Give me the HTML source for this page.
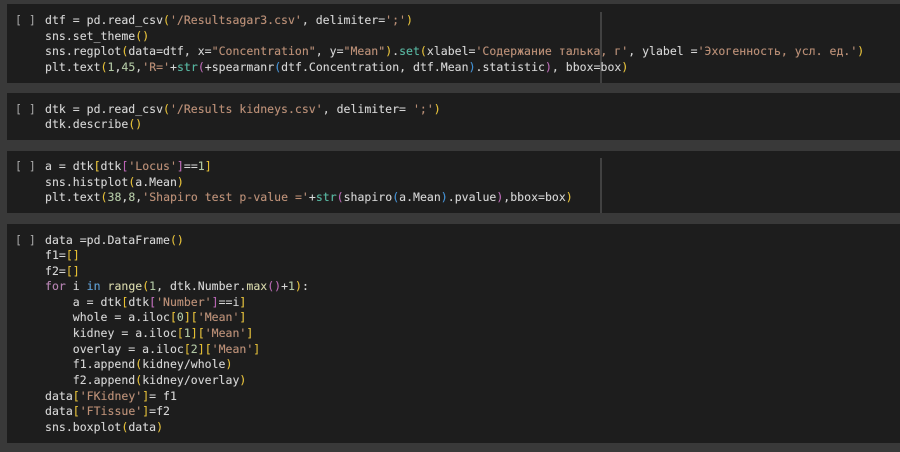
<!DOCTYPE html>
<html><head><meta charset="utf-8">
<style>
html,body{margin:0;padding:0;background:#393939;width:900px;height:452px;overflow:hidden}
.c{position:absolute;left:7px;width:893px;background:#1d1d1d}
.v{position:absolute;left:600px;width:2px;background:#414141}
.l{position:absolute;left:45px;white-space:pre;font:11.5px/16px "DejaVu Sans Mono","Liberation Mono",monospace;letter-spacing:.018px;color:#d6d6d6;text-shadow:0 0 .4px rgba(214,214,214,.55);filter:blur(.3px)}
.b{position:absolute;left:15px;white-space:pre;font:11.5px/16px "DejaVu Sans Mono","Liberation Mono",monospace;color:#a8a8a8;filter:blur(.35px)}
i{font-style:normal}
.s{color:#bd8d72}.y{color:#e8c02e}.p{color:#bb62b5}.u{color:#3a8fd8}.n{color:#b0c8a2}.t{color:#4fb8a0}.f{color:#d8d8a8}.k{color:#b77fb3}.w{color:#569cd6}
</style></head><body>
<div class="c" style="top:4px;height:79px"></div>
<div class="c" style="top:93px;height:47px"></div>
<div class="c" style="top:151px;height:62px"></div>
<div class="c" style="top:224px;height:219px"></div>
<div class="v" style="top:12px;height:71px"></div>
<div class="v" style="top:158px;height:55px"></div>

<div class="b" style="top:12px">[ ]</div>
<div class="l" style="top:12px">dtf = pd.read_csv<i class="y">(</i><i class="s">'/Resultsagar3.csv'</i>, delimiter=<i class="s">';'</i><i class="y">)</i></div>
<div class="l" style="top:27.5px">sns.set_theme<i class="y">()</i></div>
<div class="l" style="top:43px">sns.regplot<i class="y">(</i>data=dtf, x=<i class="s">"Concentration"</i>, y=<i class="s">"Mean"</i><i class="y">)</i>.<i class="t">set</i><i class="y">(</i>xlabel=<i class="s">'Содержание талька, г'</i>, ylabel =<i class="s">'Эхогенность, усл. ед.'</i><i class="y">)</i></div>
<div class="l" style="top:58.5px">plt.text<i class="y">(</i><i class="n">1</i>,<i class="n">45</i>,<i class="s">'R='</i>+<i class="t">str</i><i class="p">(</i>+spearmanr<i class="u">(</i>dtf.Concentration, dtf.Mean<i class="u">)</i>.statistic<i class="p">)</i>, bbox=box<i class="y">)</i></div>

<div class="b" style="top:100.5px">[ ]</div>
<div class="l" style="top:100.5px">dtk = pd.read_csv<i class="y">(</i><i class="s">'/Results kidneys.csv'</i>, delimiter= <i class="s">';'</i><i class="y">)</i></div>
<div class="l" style="top:116px">dtk.describe<i class="y">()</i></div>

<div class="b" style="top:158px">[ ]</div>
<div class="l" style="top:158px">a = dtk<i class="y">[</i>dtk<i class="p">[</i><i class="s">'Locus'</i><i class="p">]</i>==<i class="n">1</i><i class="y">]</i></div>
<div class="l" style="top:173.5px">sns.histplot<i class="y">(</i>a.Mean<i class="y">)</i></div>
<div class="l" style="top:189px">plt.text<i class="y">(</i><i class="n">38</i>,<i class="n">8</i>,<i class="s">'Shapiro test p-value ='</i>+<i class="t">str</i><i class="p">(</i>shapiro<i class="u">(</i>a.Mean<i class="u">)</i>.pvalue<i class="p">)</i>,bbox=box<i class="y">)</i></div>

<div class="b" style="top:231.5px">[ ]</div>
<div class="l" style="top:231.5px">data =pd.DataFrame<i class="y">()</i></div>
<div class="l" style="top:247px">f1=<i class="y">[]</i></div>
<div class="l" style="top:262.5px">f2=<i class="y">[]</i></div>
<div class="l" style="top:278px"><i class="k">for</i> i <i class="w">in</i> <i class="f">range</i><i class="y">(</i><i class="n">1</i>, dtk.Number.<i class="f">max</i><i class="p">()</i>+<i class="n">1</i><i class="y">)</i>:</div>
<div class="l" style="top:293.7px">    a = dtk<i class="y">[</i>dtk<i class="p">[</i><i class="s">'Number'</i><i class="p">]</i>==i<i class="y">]</i></div>
<div class="l" style="top:309.3px">    whole = a.iloc<i class="y">[</i><i class="n">0</i><i class="y">][</i><i class="s">'Mean'</i><i class="y">]</i></div>
<div class="l" style="top:325px">    kidney = a.iloc<i class="y">[</i><i class="n">1</i><i class="y">][</i><i class="s">'Mean'</i><i class="y">]</i></div>
<div class="l" style="top:340.5px">    overlay = a.iloc<i class="y">[</i><i class="n">2</i><i class="y">][</i><i class="s">'Mean'</i><i class="y">]</i></div>
<div class="l" style="top:356px">    f1.append<i class="y">(</i>kidney/whole<i class="y">)</i></div>
<div class="l" style="top:372px">    f2.append<i class="y">(</i>kidney/overlay<i class="y">)</i></div>
<div class="l" style="top:387.5px">data<i class="y">[</i><i class="s">'FKidney'</i><i class="y">]</i>= f1</div>
<div class="l" style="top:403px">data<i class="y">[</i><i class="s">'FTissue'</i><i class="y">]</i>=f2</div>
<div class="l" style="top:418.5px">sns.boxplot<i class="y">(</i>data<i class="y">)</i></div>
</body></html>
